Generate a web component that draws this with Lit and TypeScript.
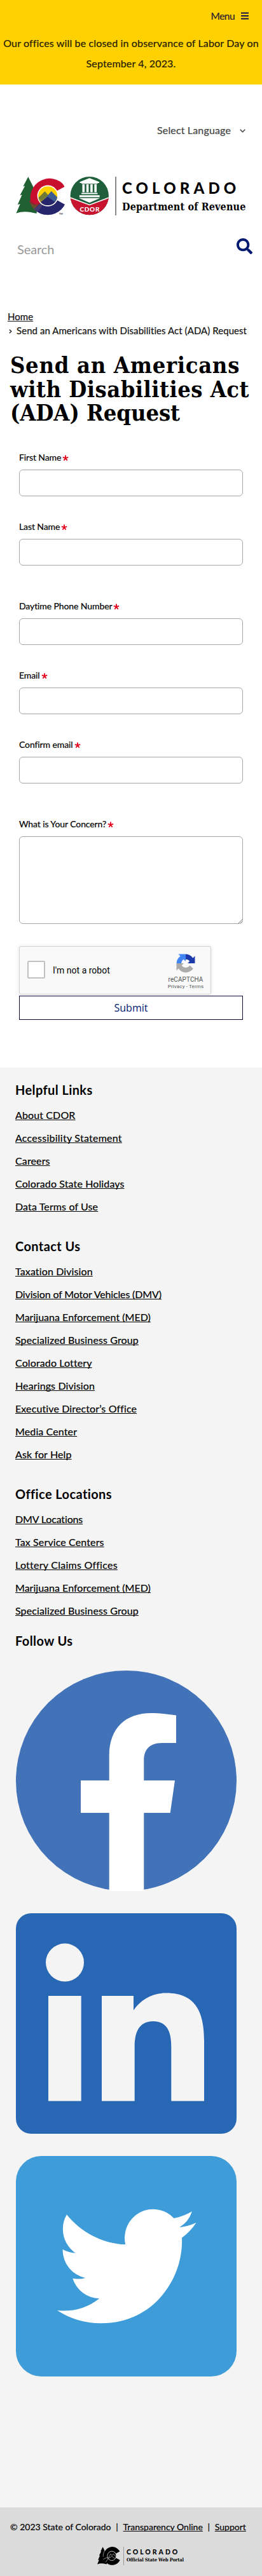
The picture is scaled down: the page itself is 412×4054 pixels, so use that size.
import { LitElement, html, css } from "lit";
import { customElement, property } from "lit/decorators.js";

type Link = [label: string, tracking?: string];

const HELPFUL: Link[] = [["About CDOR"], ["Accessibility Statement", "wide"], ["Careers"], ["Colorado State Holidays"], ["Data Terms of Use"]];
const CONTACT: Link[] = [
  ["Taxation Division"], ["Division of Motor Vehicles (DMV)", "tight"], ["Marijuana Enforcement (MED)", "flat"],
  ["Specialized Business Group"], ["Colorado Lottery"], ["Hearings Division"], ["Executive Director’s Office"],
  ["Media Center"], ["Ask for Help"],
];
const OFFICES: Link[] = [
  ["DMV Locations", "tight"], ["Tax Service Centers"], ["Lottery Claims Offices", "wide"],
  ["Marijuana Enforcement (MED)", "flat"], ["Specialized Business Group"],
];

const TREE = "M72 25L48 71L57 68L33 113L43 110L22 157L34 154L15 198C50 186 75 190 112 199L120 120Z";

@customElement("state-emblem")
class StateEmblem extends LitElement {
  static styles = css`
    :host { display: block; }
    svg { display: block; width: 100%; height: 100%; }
    .seal { font: 900 30px Lato, sans-serif; }
    .tm { font: 700 11px Lato, sans-serif; }
  `;
  render() {
    return html`<svg viewBox="15 24 441 184">
      <defs>
        <clipPath id="sun"><circle cx="165" cy="115" r="45"/></clipPath>
        <clipPath id="ring"><circle cx="165" cy="115" r="91"/></clipPath>
        <clipPath id="seal"><circle cx="363" cy="115" r="91"/></clipPath>
      </defs>
      <path d=${TREE} fill="#1f6133"/>
      <g clip-path="url(#ring)">
        <path d="M248 70A91 91 0 1 0 100 179L132 147A46 46 0 1 1 209 91Z" fill="#c8102e"/>
        <path d="M76 136L84 140L112 160L130 148L140 156L106 190C86 172 77 150 76 136Z" fill="#8b2431"/>
        <path d="M78 148L104 160L118 150L98 188C86 176 81 164 78 148Z" fill="#64502f"/>
        <path d="M98 181L134 145L160 160L148 204C128 204 110 193 98 181Z" fill="#443b72"/>
        <path d="M118 191L143 155A46 46 0 0 0 210 136L250 158A91 91 0 0 1 108 188Z" fill="#25266b"/>
      </g>
      <circle cx="165" cy="115" r="50" fill="#fff"/>
      <g clip-path="url(#sun)">
        <path d="M110 60H220V170H110Z" fill="#ffd100"/>
        <path d="M112 133L151 94L166 111L182 93L220 132V170H112Z" fill="#8b8636"/>
        <path d="M151 94L166 111L140 134L118 128Z" fill="#6f7936"/>
        <path d="M182 93L220 132V170H150L140 142Z" fill="#3d5d93"/>
        <path d="M110 162L164 119L220 160V170H110Z" fill="#25266b"/>
      </g>
      <text class="tm" x="219" y="206" fill="#333">TM</text>
      <g clip-path="url(#seal)">
        <path d="M270 20H456V210H270Z" fill="#1f5f3b"/>
        <path d="M270 122L363 158L456 122V210H270Z" fill="#c8142f"/>
        <path d="M270 123L363 158L456 123" fill="none" stroke="#fff" stroke-width="5"/>
      </g>
      <path d="M363 31L409 49V54H401V58H325V54H317V49ZM329 60H340V98H329ZM348 60H359V98H348ZM367 60H378V98H367ZM386 60H397V98H386ZM325 101H401V107H325ZM315 112H411V121H315ZM313 126H413L363 148Z" fill="#fff"/>
      <text class="seal" x="317" y="190" fill="#fff" textLength="93">CDOR</text>
    </svg>`;
  }
}

@customElement("form-field")
class FormField extends LitElement {
  @property() label = "";
  @property({ type: Boolean }) multiline = false;
  static styles = css`
    :host { display: block; font: 14px/20px Lato, "Open Sans", sans-serif; color: #000; letter-spacing: -0.1px; -webkit-text-stroke: 0.2px; }
    .label { display: flex; align-items: center; height: 20px; margin-bottom: 9px; }
    .star { width: 10px; height: 10px; margin: 3px 0 0 2px; }
    .box { display: block; box-sizing: border-box; width: 352px; height: 42px; margin: 0; border: 1px solid #a6a6a6; border-radius: 6px; background: #fff; padding: 8px; outline: none; }
    .area { height: 138px; resize: none; }
    .wrap { position: relative; width: 352px; }
    .grip { position: absolute; right: 1px; bottom: 1px; width: 6px; height: 6px; }
  `;
  render() {
    return html`<label class="label">${this.label}
      <svg class="star" viewBox="-5 -5 10 10"><path d="M0 0V-4.4M0 0L4.2-1.4M0 0L2.6 3.6M0 0L-2.6 3.6M0 0L-4.2-1.4" stroke="#e3001b" stroke-width="1.8"/></svg>
    </label>
    ${this.multiline
      ? html`<div class="wrap"><textarea class="box area"></textarea><svg class="grip" viewBox="0 0 6 6"><path d="M0 6L6 0M3 6L6 3" stroke="#777"/></svg></div>`
      : html`<input class="box">`}`;
  }
}

@customElement("app-root")
class AppRoot extends LitElement {
  static styles = css`
    :host { display: block; width: 412px; height: 4054px; overflow: hidden; background: #fff; color: #000; font: 16px/20px Lato, "Open Sans", sans-serif; }
    * { box-sizing: border-box; }
    h1, h2, p, ul { margin: 0; padding: 0; font-weight: 400; }
    a { color: inherit; text-decoration: underline; text-decoration-thickness: 1px; text-underline-offset: 1px; text-decoration-skip-ink: none; }
    svg { display: block; flex: none; }
    .notice, .lang, .crumbs, ul, .copy { -webkit-text-stroke: 0.2px; }

    .notice { height: 133px; background: #ffd100; color: #241a00; padding-top: 15px; }
    .menu { display: flex; justify-content: flex-end; align-items: center; height: 20px; padding-right: 21px; font-size: 15.5px; letter-spacing: -0.55px; color: #2a2030; }
    .bars { width: 12px; height: 12px; margin-left: 10px; }
    .notice p { margin-top: 17px; line-height: 32px; letter-spacing: 0.15px; text-align: center; white-space: nowrap; }

    .lang { display: flex; justify-content: flex-end; align-items: center; margin-top: 62px; height: 20px; padding-right: 26px; color: #444; letter-spacing: 0.15px; }
    .chev { width: 9px; height: 6px; margin: 1px 0 0 14px; }

    .brand { display: flex; height: 61px; margin: 63px 0 0 25px; }
    .emblem { width: 147px; height: 61px; }
    .rule { width: 2px; height: 61px; margin: 0 9px 0 9px; background: #8a8a8a; }
    .words { padding-top: 4px; white-space: nowrap; }
    .state { font: 900 24px/28px Lato, sans-serif; letter-spacing: 6.1px; }
    .dept { margin-top: 6px; font: 700 16px/20px "DejaVu Serif Condensed", "DejaVu Serif", serif; letter-spacing: 0.15px; }

    .search { display: flex; justify-content: space-between; height: 32px; margin-top: 36px; padding: 0 15px 0 27px; }
    .hint { padding-top: 2px; font-size: 20px; line-height: 30px; color: #999; letter-spacing: -0.1px; }
    .lens { width: 25px; height: 25px; }

    .crumbs { margin-top: 80px; padding-left: 12px; font-size: 15px; line-height: 22px; color: #111; white-space: nowrap; letter-spacing: 0.06px; }
    .here { display: flex; align-items: center; }
    .sep { width: 5px; height: 7px; margin: 3px 7px 0 2px; }

    h1 { margin: 25px 0 0 16px; font: 700 36px/37.5px "DejaVu Serif Condensed", "DejaVu Serif", serif; white-space: nowrap; }
    .l1, .l2, .l3 { display: block; }
    .l1 { letter-spacing: 0.7px; }
    .l2 { letter-spacing: 0.46px; }
    .l3 { letter-spacing: -0.06px; }

    .form { display: grid; gap: 38px; margin: 41px 0 0 30px; }
    .apart { margin-top: 16px; }

    .captcha { display: flex; width: 302px; height: 76px; margin: 35px 0 0 30px; border: 1px solid #d3d3d3; border-radius: 3px; background: #f9f9f9; box-shadow: 0 0 4px 1px rgba(0, 0, 0, 0.08); font-family: Roboto, sans-serif; }
    .check { width: 28px; height: 28px; margin: 22px 0 0 12px; border: 2px solid #c1c1c1; border-radius: 2px; background: #fff; }
    .robot { flex: 1; padding: 27px 0 0 12px; font-size: 14px; line-height: 20px; }
    .badge { width: 78px; padding-top: 10px; text-align: center; color: #555; }
    .arrows { width: 32px; height: 32px; margin: 0 auto; }
    .name { font-size: 10px; line-height: 13px; margin-top: 3px; letter-spacing: 0.1px; }
    .terms { font-size: 8px; line-height: 10px; letter-spacing: 0.15px; }

    .submit { display: block; width: 352px; height: 38px; margin: 2px 0 0 30px; border: 1px solid #0d0b3d; border-radius: 0; background: #fff; color: #001970; font: 16px/34px "Open Sans", sans-serif; padding: 0; }

    .links { height: 2266px; margin-top: 75px; padding: 20px 24px 0; background: #f4f4f4; }
    h2 { margin-bottom: 7px; font: 700 20px/30px Lato, sans-serif; letter-spacing: 0.4px; }
    ul { list-style: none; margin-bottom: 29px; }
    li { line-height: 36px; letter-spacing: 0.12px; }
    .wide { letter-spacing: 0.25px; }
    .tight { letter-spacing: -0.15px; }
    .flat { letter-spacing: 0.02px; }
    .last { margin-bottom: 14px; }
    .social { display: grid; gap: 35px; margin: 32px 0 0 1px; }
    .social svg { width: 347px; height: 347px; }

    .legal { height: 108px; padding-top: 21px; background: #dbdbdb; font-size: 14px; }
    .copy { display: flex; padding-left: 16px; white-space: nowrap; }
    .copy .bar { width: 19px; text-align: center; }
    .portal { display: flex; margin: 21px 0 0 153px; height: 29px; }
    .mono { width: 36px; height: 29px; }
    .thin { width: 1px; margin: 0 4px 0 5px; background: #999; }
    .pstate { font: 900 10.5px/14px Lato, sans-serif; letter-spacing: 2.95px; padding-top: 1px; }
    .pname { font: 700 7.5px/11px "DejaVu Serif Condensed", "DejaVu Serif", serif; white-space: nowrap; letter-spacing: -0.15px; }
  `;

  private list(items: Link[], extra = "") {
    return html`<ul class=${extra}>${items.map(([label, tracking]) => html`<li class=${tracking ?? ""}><a>${label}</a></li>`)}</ul>`;
  }

  render() {
    return html`
      <header>
        <div class="notice">
          <div class="menu">Menu
            <svg class="bars" viewBox="0 0 12 12"><path d="M0 1.5H12M0 6H12M0 10.5H12" stroke="#14104a" stroke-width="2"/></svg>
          </div>
          <p>Our offices will be closed in observance of Labor Day on<br>September 4, 2023.</p>
        </div>
        <div class="lang">Select Language
          <svg class="chev" viewBox="0 0 9 6"><path d="M0.7 0.8L4.5 4.7L8.3 0.8" fill="none" stroke="#444" stroke-width="1.6"/></svg>
        </div>
        <div class="brand">
          <state-emblem class="emblem"></state-emblem>
          <div class="rule"></div>
          <div class="words"><div class="state">COLORADO</div><div class="dept">Department of Revenue</div></div>
        </div>
        <div class="search">
          <span class="hint">Search</span>
          <svg class="lens" viewBox="0 0 512 512"><path fill="#001970" d="M505 442.7L405.3 343c-4.5-4.5-10.6-7-17-7H372c27.6-35.3 44-79.7 44-128C416 93.1 322.9 0 208 0S0 93.1 0 208s93.1 208 208 208c48.3 0 92.7-16.4 128-44v16.3c0 6.4 2.5 12.5 7 17l99.7 99.7c9.4 9.4 24.6 9.4 33.9 0l28.3-28.3c9.4-9.4 9.4-24.6.1-34zM208 336c-70.7 0-128-57.2-128-128 0-70.7 57.2-128 128-128 70.7 0 128 57.2 128 128 0 70.7-57.2 128-128 128z"/></svg>
        </div>
      </header>

      <main>
        <div class="crumbs">
          <div><a>Home</a></div>
          <div class="here"><svg class="sep" viewBox="0 0 5 7"><path d="M0.8 0.7L3.8 3.5L0.8 6.3" fill="none" stroke="#111" stroke-width="1.2"/></svg>Send an Americans with Disabilities Act (ADA) Request</div>
        </div>
        <h1><span class="l1">Send an Americans</span><span class="l2">with Disabilities Act</span><span class="l3">(ADA) Request</span></h1>
        <div class="form">
          <form-field label="First Name"></form-field>
          <form-field label="Last Name"></form-field>
          <form-field class="apart" label="Daytime Phone Number"></form-field>
          <form-field label="Email"></form-field>
          <form-field label="Confirm email"></form-field>
          <form-field class="apart" label="What is Your Concern?" multiline></form-field>
        </div>
        <div class="captcha">
          <div class="check"></div>
          <div class="robot">I'm not a robot</div>
          <div class="badge">
            <svg class="arrows" viewBox="0 0 64 64">
              <path fill="#1c3aa9" d="M61 31.9V9L54.6 15.4A29 29 0 0 0 32 3V19.4A15 15 0 0 1 44.5 25.5L38 32Z"/>
              <path fill="#4285f4" d="M31.9 3H9L15.4 9.4A29 29 0 0 0 3.2 32H18.5A15 15 0 0 1 25.5 19.5L32 26Z"/>
              <path fill="#ababab" d="M3 32.1V55L9.4 48.6A29 29 0 0 0 32 61C41 61 50 56 55.5 49L45 38.5A15 15 0 0 1 19.5 38.5L26 32Z"/>
            </svg>
            <div class="name">reCAPTCHA</div>
            <div class="terms">Privacy - Terms</div>
          </div>
        </div>
        <button class="submit">Submit</button>
      </main>

      <footer>
        <div class="links">
          <h2>Helpful Links</h2>${this.list(HELPFUL)}
          <h2>Contact Us</h2>${this.list(CONTACT)}
          <h2>Office Locations</h2>${this.list(OFFICES, "last")}
          <h2>Follow Us</h2>
          <div class="social">
            <svg viewBox="0 0 347 347">
              <circle cx="173.5" cy="173.5" r="173.5" fill="#4272b8"/>
              <path fill="#fff" d="M146.7 347V224H102V173H146.7V134C146.7 90 173 67 213 67C232 67 252 70.6 252 70.6V114H230C208 114 201.3 127 201.3 141V173H250L242.7 224H201.3V347Z"/>
            </svg>
            <svg viewBox="0 0 347 347">
              <rect width="347" height="347" rx="24" fill="#2867b4"/>
              <g fill="#f4f4f4"><circle cx="77" cy="77.6" r="30"/><path d="M51 130H102.7V295.5H51ZM135 130H185V152.7C196 136 214 125.4 236.7 125.4C284 125.4 296 158 296 200V295.5H244.3V210C244.3 190 240 170 215.7 170C192 170 186.7 190 186.7 210V295.5H135Z"/></g>
            </svg>
            <svg viewBox="0 0 347 347">
              <rect width="347" height="347" rx="40" fill="#3e9cd9"/>
              <path fill="#fff" transform="translate(65 63.1) scale(9.1 9.2)" d="M23.953 4.57a10 10 0 01-2.825.775 4.958 4.958 0 002.163-2.723c-.951.555-2.005.959-3.127 1.184a4.92 4.92 0 00-8.384 4.482C7.69 8.095 4.067 6.13 1.64 3.162a4.822 4.822 0 00-.666 2.475c0 1.71.87 3.213 2.188 4.096a4.904 4.904 0 01-2.228-.616v.06a4.923 4.923 0 003.946 4.827 4.996 4.996 0 01-2.212.085 4.936 4.936 0 004.604 3.417 9.867 9.867 0 01-6.102 2.105c-.39 0-.779-.023-1.17-.067a13.995 13.995 0 007.557 2.209c9.053 0 13.998-7.496 13.998-13.985 0-.21 0-.42-.015-.63A9.935 9.935 0 0024 4.59z"/>
            </svg>
          </div>
        </div>
        <div class="legal">
          <div class="copy"><span>© 2023 State of Colorado</span><span class="bar">|</span><a>Transparency Online</a><span class="bar">|</span><a>Support</a></div>
          <div class="portal">
            <svg class="mono" viewBox="15 24 237 184" preserveAspectRatio="none">
              <path d=${TREE}/>
              <path d="M248 70A91 91 0 1 0 250 158L207 135A46 46 0 1 1 207 92Z"/>
              <circle cx="165" cy="115" r="46" stroke="#dbdbdb" stroke-width="5"/>
              <path d="M76 124A91 91 0 0 1 108 46M76 150L110 132L130 140L152 95L166 112L182 94L208 125M130 140L166 120L200 142M100 180L130 140" fill="none" stroke="#dbdbdb" stroke-width="4"/>
            </svg>
            <div class="thin"></div>
            <div><div class="pstate">COLORADO</div><div class="pname">Official State Web Portal</div></div>
          </div>
        </div>
      </footer>`;
  }
}
